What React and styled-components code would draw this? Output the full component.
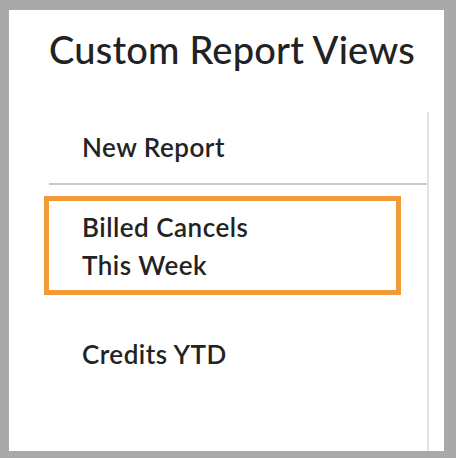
import React from "react";
import styled, { createGlobalStyle } from "styled-components";

const GlobalStyle = createGlobalStyle`
  html, body {
    margin: 0;
    padding: 0;
    background: #a9a9a9;
  }
  body {
    font-family: Lato, "Open Sans", sans-serif;
    color: #232323;
  }
`;

const Frame = styled.div`
  width: 456px;
  height: 458px;
  box-sizing: border-box;
  padding: 10px 12px 7px 9px;
  background: #a9a9a9;
`;

const Panel = styled.section`
  height: 100%;
  background: #fff;
  display: flex;
  flex-direction: column;
  overflow: hidden;
`;

const Title = styled.h1`
  margin: 0;
  padding: 16px 0 0 40px;
  font-size: 38px;
  line-height: 46px;
  font-weight: 500;
  letter-spacing: 0.2px;
  color: #222;
`;

const Menu = styled.ul`
  list-style: none;
  margin: 40px 15px 0 40px;
  padding: 0;
  flex: 1;
  border-right: 2px solid #e1e3e7;
`;

const Item = styled.li`
  padding: 0 0 0 33px;
  font-size: 26px;
  line-height: 38px;
  font-weight: 600;
  letter-spacing: 0.5px;
  color: #232323;
`;

const DividedItem = styled(Item)`
  padding-top: 16px;
  padding-bottom: 17px;
  border-bottom: 2px solid #c8ccd1;
`;

const ActiveItem = styled(Item)`
  margin: 11px 26px 0 -5px;
  padding: 7px 0 6px 33px;
  border: 5px solid #f29a38;
`;

const PlainItem = styled(Item)`
  margin-top: 40px;
`;

export default function App() {
  return (
    <>
      <GlobalStyle />
      <Frame>
        <Panel>
          <Title>Custom Report Views</Title>
          <Menu>
            <DividedItem>New Report</DividedItem>
            <ActiveItem>
              Billed Cancels
              <br />
              This Week
            </ActiveItem>
            <PlainItem>Credits YTD</PlainItem>
          </Menu>
        </Panel>
      </Frame>
    </>
  );
}
